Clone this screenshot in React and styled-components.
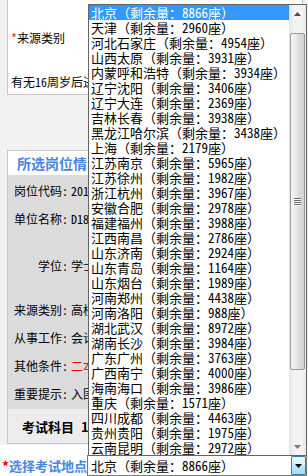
import React from 'react';
import styled, { createGlobalStyle } from 'styled-components';

const GlobalStyle = createGlobalStyle`
  html, body { margin: 0; padding: 0; background: #fff; }
  body {
    font-family: "Noto Sans Mono CJK SC", "Noto Sans CJK SC", sans-serif;
    font-size: 12px;
    color: #000;
    overflow: hidden;
  }
  * { box-sizing: border-box; }
`;

const Page = styled.div`
  position: relative;
  width: 308px;
  height: 476px;
  overflow: hidden;
  background: #fff;
`;

const Backdrop = styled.div`
  background: #f2f2f2;
  padding-left: 7px;
  height: 445px;
  display: flex;
  flex-direction: column;
`;

const TopBox = styled.div`
  width: 296px;
  height: 95px;
  background: #fff;
  border: 1px solid #c8c8c8;
  border-top: none;
  padding: 30px 0 0 3px;
  display: flex;
  flex-direction: column;
  gap: 28px;
`;

const Line = styled.div`
  height: 16px;
  line-height: 16px;
  white-space: nowrap;
`;

const Star = styled.span`
  color: #f00;
  font-weight: ${p => (p.$bold ? 700 : 400)};
  font-size: ${p => p.$size || 12}px;
`;

const Panel = styled.div`
  margin-top: 55px;
  width: 296px;
  border: 1px solid #c8c8c8;
  display: flex;
  flex-direction: column;
`;

const PanelHead = styled.div`
  height: 24px;
  background: #fff;
  padding-left: 9px;
  display: flex;
  align-items: center;
  font-family: "Noto Sans CJK SC", sans-serif;
  font-weight: 700;
  font-size: 14px;
  color: #4a86e0;
  white-space: nowrap;
`;

const PanelBody = styled.div`
  background: #dcdcdc;
  padding: 1px 0 2px;
  display: flex;
  flex-direction: column;
`;

const InfoRow = styled.div`
  height: 28px;
  margin-top: ${p => p.$gap || 0}px;
  display: flex;
  align-items: center;
  white-space: nowrap;
`;

const Label = styled.div`
  width: 60px;
  text-align: right;
  flex-shrink: 0;
`;

const Value = styled.div`
  padding-left: 3px;
  color: ${p => (p.$red ? '#f00' : '#000')};
`;

const ExamRow = styled.div`
  height: 34px;
  background: #ececec;
  display: flex;
  align-items: center;
  padding-left: 14px;
  font-family: "Noto Sans CJK SC", sans-serif;
  font-weight: 700;
  font-size: 13px;
  white-space: nowrap;
`;

const ExamNo = styled.span`
  margin-left: 7px;
`;

const Footer = styled.div`
  padding-top: 10px;
  display: flex;
  align-items: center;
`;

const FootLabel = styled.div`
  width: 87px;
  padding-left: 2px;
  display: flex;
  align-items: center;
  white-space: nowrap;
  font-family: "Noto Sans CJK SC", sans-serif;
  font-weight: 700;
  font-size: 13px;
  color: #4a86e0;
`;

const Select = styled.div`
  width: 220px;
  height: 21px;
  border: 1px solid #7a7a7a;
  background: #fff;
  display: flex;
  align-items: center;
  font-size: 13px;
  white-space: nowrap;
`;

const SelectText = styled.div`
  flex: 1;
  padding-left: 3px;
  line-height: 17px;
  overflow: hidden;
`;

const DropBtn = styled.div`
  width: 15px;
  height: 19px;
  border: 1px solid #3c7fb1;
  border-radius: 1px;
  background: linear-gradient(#eaf6fd, #d9f0fc 50%, #bee6fd 50%, #a7d9f5);
  display: flex;
  align-items: center;
  justify-content: center;
`;

const List = styled.div`
  position: absolute;
  left: 88px;
  top: 4px;
  width: 219px;
  height: 452px;
  border: 1px solid #646464;
  background: #fff;
  display: flex;
  z-index: 2;
`;

const Items = styled.div`
  flex: 1;
  display: flex;
  flex-direction: column;
  overflow: hidden;
`;

const Item = styled.div`
  height: 15px;
  line-height: 15px;
  padding-left: 2px;
  font-size: 13px;
  white-space: nowrap;
  background: ${p => (p.$active ? '#3399ff' : '#fff')};
  color: ${p => (p.$active ? '#fff' : '#000')};
  outline: ${p => (p.$active ? '1px dotted #cc6a1a' : 'none')};
  outline-offset: -1px;
`;

const Scrollbar = styled.div`
  width: 17px;
  display: flex;
  flex-direction: column;
  background: linear-gradient(to right, #e4e4e4, #f2f2f2 25%, #f4f4f4 75%, #e9e9e9);
`;

const ArrowBtn = styled.div`
  height: 17px;
  display: flex;
  align-items: center;
  justify-content: center;
  margin-top: ${p => (p.$bottom ? 'auto' : '0')};
`;

const Thumb = styled.div`
  margin: 11px 1px 0;
  height: 337px;
  border: 1px solid #9a9a9a;
  border-radius: 2px;
  background: linear-gradient(to right, #f5f5f5, #e9e9e9 45%, #dedede 55%, #d3d3d3);
  display: flex;
  flex-direction: column;
  align-items: center;
  justify-content: center;
  gap: 1px;
`;

const Grip = styled.div`
  width: 7px;
  height: 1px;
  background: #6a6a6a;
  box-shadow: 0 1px 0 #fafafa;
`;

const Arrow = ({ down, color = '#4d4d4d' }) => (
  <svg width="7" height="4" viewBox="0 0 7 4">
    <path d={down ? 'M0 0 L7 0 L3.5 4 Z' : 'M0 4 L7 4 L3.5 0 Z'} fill={color} />
  </svg>
);

const cities = [
  ['北京', 8866], ['天津', 2960], ['河北石家庄', 4954], ['山西太原', 3931],
  ['内蒙呼和浩特', 3934], ['辽宁沈阳', 3406], ['辽宁大连', 2369], ['吉林长春', 3938],
  ['黑龙江哈尔滨', 3438], ['上海', 2179], ['江苏南京', 5965], ['江苏徐州', 1982],
  ['浙江杭州', 3967], ['安徽合肥', 2978], ['福建福州', 3988], ['江西南昌', 2786],
  ['山东济南', 2924], ['山东青岛', 1164], ['山东烟台', 1989], ['河南郑州', 4438],
  ['河南洛阳', 988], ['湖北武汉', 8972], ['湖南长沙', 3984], ['广东广州', 3763],
  ['广西南宁', 4000], ['海南海口', 3986], ['重庆', 1571], ['四川成都', 4463],
  ['贵州贵阳', 1975], ['云南昆明', 2972],
];

const label = (c, n) => `${c}（剩余量：${n}座）`;

const infoRows = [
  { k: '岗位代码:', v: '20160101' },
  { k: '单位名称:', v: 'D18001' },
  { k: '学位:', v: '学士', gap: 19 },
  { k: '来源类别:', v: '高校应届毕业生', gap: 16 },
  { k: '从事工作:', v: '会计' },
  { k: '其他条件:', v: '二本及以上', red: true },
  { k: '重要提示:', v: '入围人员' },
];

export default function App() {
  return (
    <Page>
      <GlobalStyle />
      <Backdrop>
        <TopBox>
          <Line><Star>*</Star>来源类别</Line>
          <Line>有无16周岁后进入高校学习经历</Line>
        </TopBox>
        <Panel>
          <PanelHead>所选岗位情况</PanelHead>
          <PanelBody>
            {infoRows.map(r => (
              <InfoRow key={r.k} $gap={r.gap}>
                <Label>{r.k}</Label>
                <Value $red={r.red}>{r.v}</Value>
              </InfoRow>
            ))}
          </PanelBody>
          <ExamRow>考试科目<ExamNo>1</ExamNo></ExamRow>
        </Panel>
      </Backdrop>
      <Footer>
        <FootLabel><Star $bold $size={14}>*</Star>选择考试地点</FootLabel>
        <Select>
          <SelectText>{label('北京', 8866)}</SelectText>
          <DropBtn><Arrow down color="#000" /></DropBtn>
        </Select>
      </Footer>
      <List>
        <Items>
          {cities.map(([c, n], i) => (
            <Item key={c} $active={i === 0}>{label(c, n)}</Item>
          ))}
        </Items>
        <Scrollbar>
          <ArrowBtn><Arrow /></ArrowBtn>
          <Thumb><Grip /><Grip /><Grip /><Grip /></Thumb>
          <ArrowBtn $bottom><Arrow down color="#7a7a7a" /></ArrowBtn>
        </Scrollbar>
      </List>
    </Page>
  );
}
